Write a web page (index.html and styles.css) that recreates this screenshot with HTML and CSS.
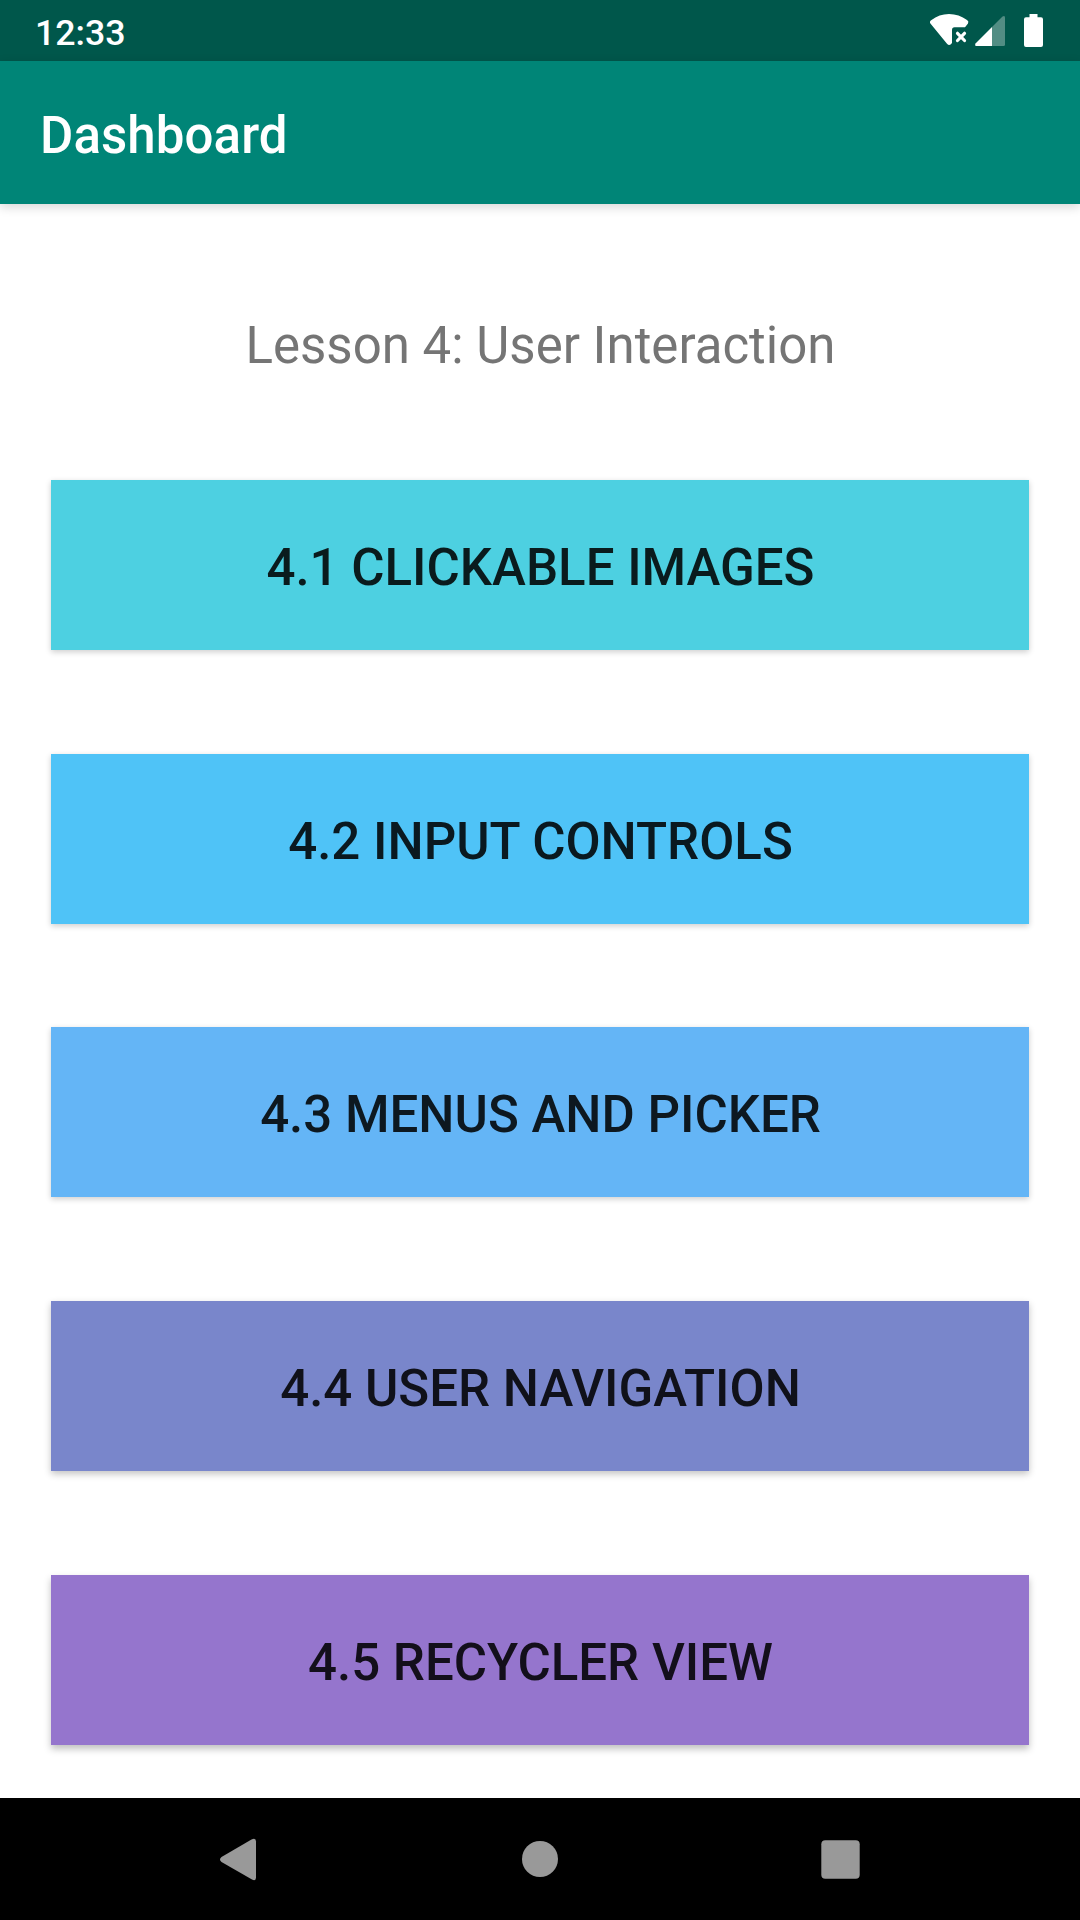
FILE: index.html
```html
<!DOCTYPE html>
<html lang="en">
<head>
<meta charset="utf-8">
<title>Dashboard</title>
<link rel="stylesheet" href="styles.css">
</head>
<body>
<div class="status">
  <span class="clock">12:33</span>
  <svg class="status-icons" width="180" height="61" viewBox="0 0 180 61" fill="#fff">
    <path d="M30.4 23.6 Q29 21.5 31.5 20 Q39 14 49 14 Q59 14 67 20 Q69.200 21.500 68 23.400 L65 27.300 H54.500 Q52 27.300 52 30 V43 Q49.500 46.500 47 43.700 Z"/>
    <path d="M57.500 33.300 L64.500 40.500 M64.500 33.300 L57.500 40.500" stroke="#fff" stroke-width="3.200" stroke-linecap="round"/>
    <path d="M92 27 L102.500 16.500 Q105 15 105 17.500 V44.500 Q105 46 103.500 46 H92 Z" opacity=".32"/>
    <path d="M92 27 V46 H76 Q74.300 45.500 75.500 43.500 Z"/>
    <path d="M129.500 17.300 V14 H137.500 V17.300 H141 Q143 17.300 143 19.300 V45 Q143 47 141 47 H126 Q124 47 124 45 V19.300 Q124 17.300 126 17.300 Z"/>
  </svg>
</div>
<header class="appbar">Dashboard</header>
<main class="content">
  <h1 class="title">Lesson 4: User Interaction</h1>
  <button class="lesson cyan">4.1 CLICKABLE IMAGES</button>
  <button class="lesson sky">4.2 INPUT CONTROLS</button>
  <button class="lesson blue">4.3 MENUS AND PICKER</button>
  <button class="lesson indigo">4.4 USER NAVIGATION</button>
  <button class="lesson purple">4.5 RECYCLER VIEW</button>
</main>
<nav class="navbar">
  <svg width="1080" height="122" viewBox="0 0 1080 122" fill="#999">
    <path d="M251.500 41.500 Q256 39.500 256 43.500 V79.500 Q256 83.500 252 81.500 L221.500 64 Q218.500 61.500 221.500 59 Z"/>
    <circle cx="540" cy="61" r="18"/>
    <rect x="821.300" y="42.300" width="38.400" height="38.400" rx="4"/>
  </svg>
</nav>
</body>
</html>
```
FILE: styles.css
```css
* { box-sizing: border-box; }
body { margin: 0; width: 1080px; height: 1920px; display: flex; flex-direction: column; overflow: hidden; background: #fff; font-family: Roboto, sans-serif; }
.status { height: 61px; flex: none; display: flex; justify-content: space-between; background: #00574b; color: #fff; padding-left: 35px; }
.clock { font-size: 35.7px; font-weight: 500; line-height: 66px; }
.appbar { height: 143px; flex: none; background: #008577; color: #fff; font-size: 51px; font-weight: 500; letter-spacing: .1px; line-height: 149px; padding-left: 40px; box-shadow: 0 3px 10px rgba(0,0,0,.16); }
.content { flex: 1; min-height: 0; display: flex; flex-direction: column; padding: 0 51px; }
.title { flex: none; margin: 105px 0 100px; height: 71px; line-height: 73px; font-size: 51px; font-weight: 400; text-align: center; text-indent: 1px; color: #757575; }
.lesson { flex: none; height: 170px; margin: 0 0 104px; padding: 4px 0 0 1px; border: 0; font: 500 51px Roboto, sans-serif; color: rgba(0,0,0,.87); box-shadow: 0 2px 6px rgba(0,0,0,.2); }
.cyan { background: #4dd0e1; }
.sky { background: #4fc3f7; margin-bottom: 103px; }
.blue { background: #64b5f6; }
.indigo { background: #7986cb; box-shadow: 0 3px 7px rgba(0,0,0,.24); }
.purple { background: #9575cd; margin-bottom: 0; box-shadow: 0 4px 7px rgba(0,0,0,.25); }
.navbar { height: 122px; flex: none; background: #000; }
.navbar svg { display: block; }
```
